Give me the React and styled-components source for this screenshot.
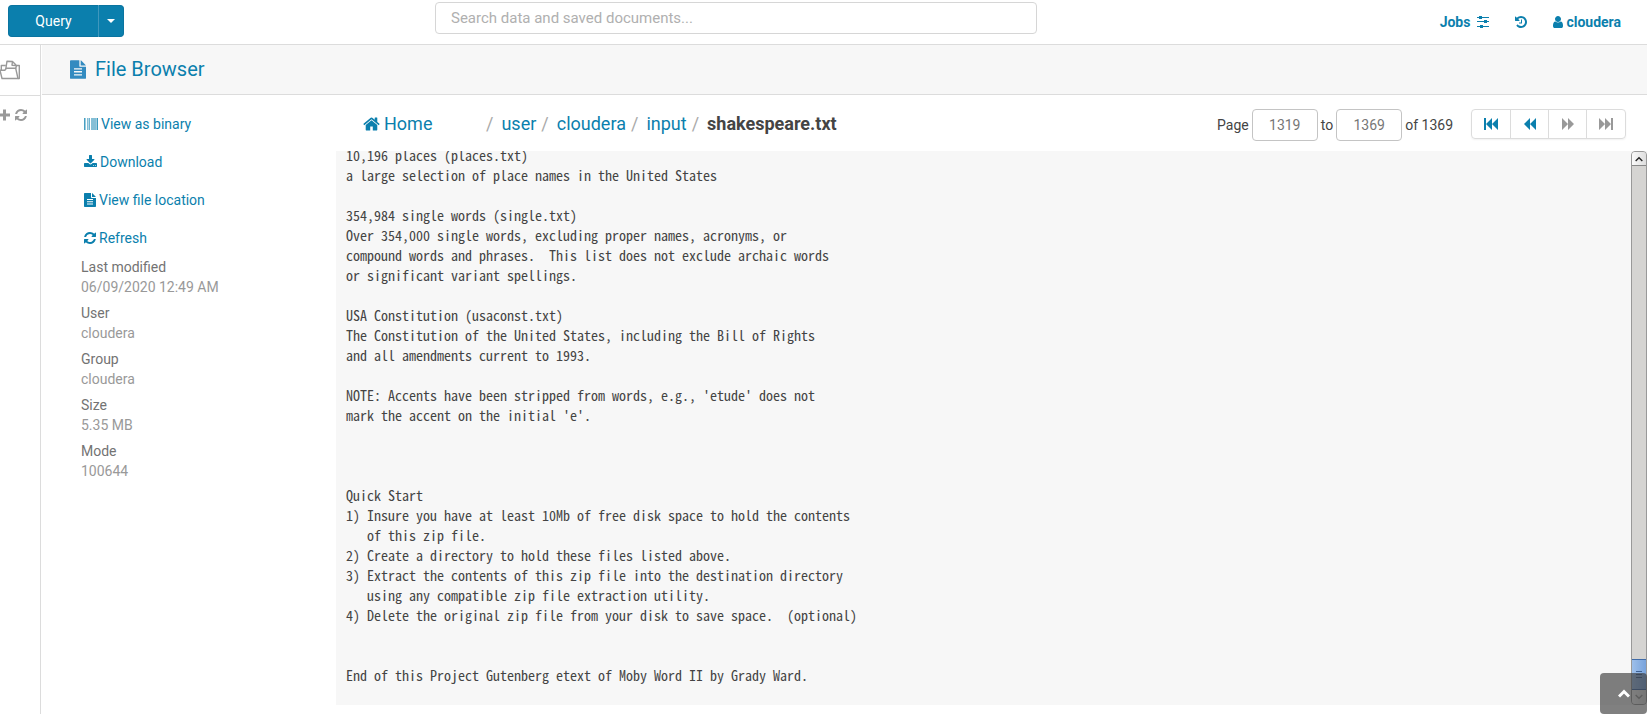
import React from 'react';
import styled, { createGlobalStyle } from 'styled-components';

const blue = '#0b7fad';
const line = '#dcdcdc';

const GlobalStyle = createGlobalStyle`
  * { box-sizing: border-box; }
  body { margin: 0; background: #fff; }
  body, button, input { font-family: Roboto, "Liberation Sans", sans-serif; font-size: 14px; }
  a { color: ${blue}; text-decoration: none; }
`;

const Page = styled.div`
  height: 100vh;
  display: flex;
  flex-direction: column;
  overflow: hidden;
  color: #444;
  line-height: 20px;
`;

const Header = styled.header`
  display: flex;
  align-items: flex-start;
  height: 45px;
  flex: none;
  border-bottom: 1px solid ${line};
`;

const QueryArea = styled.div`
  display: flex;
  flex: 0 0 435px;
  padding: 5px 0 0 8px;
`;

const QueryButton = styled.button`
  height: 32px;
  width: ${(p) => (p.$caret ? 26 : 90)}px;
  padding: 0;
  display: flex;
  align-items: center;
  justify-content: center;
  color: #fff;
  background: ${blue};
  border: 1px solid #0a74a0;
  border-left-color: ${(p) => (p.$caret ? '#3f97bd' : '#0a74a0')};
  border-width: ${(p) => (p.$caret ? '1px' : '1px 0 1px 1px')};
  border-radius: ${(p) => (p.$caret ? '0 4px 4px 0' : '4px 0 0 4px')};
`;

const SearchBox = styled.input`
  flex: 0 1 602px;
  min-width: 0;
  height: 32px;
  margin-top: 2px;
  padding: 0 15px;
  font-size: 15px;
  border: 1px solid #d6d6d6;
  border-radius: 4px;
  &::placeholder { color: #b0b0b0; opacity: 1; }
`;

const UserNav = styled.nav`
  display: flex;
  align-items: center;
  gap: 26px;
  height: 44px;
  margin-left: auto;
  padding-right: 26px;
`;

const NavLink = styled.a`
  display: flex;
  align-items: center;
  gap: ${(p) => p.$gap || 0}px;
  font-weight: 700;
`;

const Body = styled.div`
  display: flex;
  flex: 1;
  min-height: 0;
`;

const Rail = styled.aside`
  flex: 0 0 41px;
  border-right: 1px solid ${line};
  overflow: hidden;
  color: #999;
`;

const RailRow = styled.div`
  display: flex;
  align-items: center;
  gap: 4px;
  height: ${(p) => (p.$first ? 51 : 38)}px;
  border-bottom: ${(p) => (p.$first ? `1px solid ${line}` : 'none')};
`;

const RailButton = styled.button`
  display: flex;
  padding: 0;
  border: 0;
  background: none;
  color: inherit;
`;

const Main = styled.main`
  flex: 1;
  min-width: 0;
  margin-left: 1px;
  display: flex;
  flex-direction: column;
`;

const TitleBar = styled.div`
  display: flex;
  align-items: center;
  gap: 9px;
  height: 50px;
  flex: none;
  padding-left: 28px;
  background: #f7f7f7;
  border-bottom: 1px solid ${line};
  color: #338bc0;
`;

const Title = styled.h1`
  margin: 0;
  padding-bottom: 2px;
  font-size: 20px;
  font-weight: 400;
  color: ${blue};
`;

const Content = styled.div`
  display: flex;
  flex: 1;
  min-height: 0;
`;

const Sidebar = styled.div`
  flex: 0 0 294px;
  padding: 10px 0 0 39px;
`;

const Actions = styled.nav`
  display: flex;
  flex-direction: column;
  padding-left: 3px;
`;

const Action = styled.a`
  display: flex;
  align-items: center;
  gap: 3px;
  height: 38px;
`;

const Meta = styled.dl`
  margin: 0;
`;

const MetaLabel = styled.dt`
  color: #737373;
`;

const MetaValue = styled.dd`
  margin: 0 0 6px;
  color: #999;
`;

const Viewer = styled.section`
  flex: 1;
  min-width: 0;
  display: flex;
  flex-direction: column;
  padding: 14px 0 9px;
`;

const Toolbar = styled.div`
  display: flex;
  align-items: flex-start;
  justify-content: space-between;
  height: 42px;
  flex: none;
  padding: 0 21px 0 27px;
`;

const Crumbs = styled.nav`
  display: flex;
  align-items: center;
  height: 30px;
  font-size: 18px;
`;

const HomeLink = styled.a`
  display: flex;
  align-items: center;
  gap: 4px;
  width: 118px;
`;

const Slash = styled.span`
  padding: 0 8px 0 5px;
  color: #aaa;
`;

const Pager = styled.form`
  display: flex;
  align-items: center;
  gap: 3px;
  height: 32px;
`;

const PageLabel = styled.label`
  display: flex;
  align-items: center;
  gap: 3px;
`;

const PageInput = styled.input`
  width: 66px;
  height: 32px;
  padding: 0;
  text-align: center;
  color: #777;
  border: 1px solid #c4c4c4;
  border-radius: 4px;
`;

const SeekGroup = styled.div`
  display: flex;
  align-self: flex-start;
  margin-left: 15px;
  border: 1px solid ${line};
  border-radius: 4px;
  box-shadow: 0 1px 2px rgba(0, 0, 0, 0.06);
`;

const SeekButton = styled.button`
  display: flex;
  align-items: center;
  justify-content: center;
  width: 38px;
  height: 28px;
  padding: 0;
  border: 0;
  background: none;
  color: ${blue};
  &:disabled { color: #999; }
  & + & { border-left: 1px solid ${line}; }
  &:last-child { width: 39px; }
`;

const FilePane = styled.div`
  display: flex;
  flex: 1;
  min-height: 0;
  background: #f7f7f7;
`;

const FileWindow = styled.div`
  flex: 1;
  min-width: 0;
  display: flex;
  flex-direction: column;
  justify-content: flex-end;
  overflow: hidden;
  padding: 0 10px 20px;
`;

const FileText = styled.pre`
  margin: 0;
  font-family: "Noto Sans Mono CJK SC", "Liberation Mono", monospace;
  font-size: 14px;
  line-height: 20px;
`;

const ScrollTrack = styled.div`
  display: flex;
  flex-direction: column;
  flex: 0 0 16px;
  background: #d5d4d2;
  border: 1px solid #999;
  border-radius: 4px;
`;

const ScrollEnd = styled.div`
  display: flex;
  align-items: center;
  justify-content: center;
  height: 14px;
  background: linear-gradient(90deg, #fafafa, #dedede);
  border-bottom: ${(p) => (p.$top ? '1px solid #888' : 'none')};
  border-radius: ${(p) => (p.$top ? '3px 3px 0 0' : '0 0 3px 3px')};
  color: ${(p) => (p.$top ? '#222' : '#999')};
`;

const ScrollThumb = styled.div`
  display: flex;
  flex-direction: column;
  align-items: center;
  justify-content: center;
  gap: 2px;
  height: 31px;
  margin-top: auto;
  background: linear-gradient(90deg, #9dbfea, #78a3dc);
  border: solid #3f6ba8;
  border-width: 1px 0;
`;

const Grip = styled.i`
  width: 6px;
  height: 1px;
  background: #3c5f92;
`;

const TopButton = styled.button`
  position: fixed;
  right: 0;
  bottom: 0;
  width: 47px;
  height: 41px;
  display: flex;
  align-items: center;
  justify-content: center;
  padding: 0;
  border: 0;
  border-radius: 4px;
  background: rgba(60, 60, 60, 0.65);
  color: #fff;
`;

const shapes = {
  home: 'M1472 992v480q0 26-19 45t-45 19h-384v-384h-256v384h-384q-26 0-45-19t-19-45v-480q0-1 .5-3t.5-3l575-474 575 474q1 2 1 6zm223-69l-62 74q-8 9-21 11h-3q-13 0-21-7l-692-577-692 577q-12 8-24 7-13-2-21-11l-62-74q-8-10-7-23.5t11-21.5l719-599q32-26 76-26t76 26l244 204v-195q0-14 9-23t23-9h192q14 0 23 9t9 23v408l219 182q10 8 11 21.5t-7 23.5z',
  refresh: 'M1639 1056q0 5-1 7-64 268-268 434.5t-478 166.5q-146 0-282.5-55t-243.5-157l-129 129q-19 19-45 19t-45-19-19-45v-448q0-26 19-45t45-19h448q26 0 45 19t19 45-19 45l-137 137q71 66 161 102t187 36q134 0 250-65t186-179q11-17 53-117 8-23 30-23h192q13 0 22.5 9.5t9.5 22.5zm25-800v448q0 26-19 45t-45 19h-448q-26 0-45-19t-19-45 19-45l138-138q-148-137-349-137-134 0-250 65t-186 179q-11 17-53 117-8 23-30 23h-199q-13 0-22.5-9.5t-9.5-22.5v-7q65-268 270-434.5t480-166.5q146 0 284 55.5t245 156.5l130-129q19-19 45-19t45 19 19 45z',
  download: 'M1344 1344q0-26-19-45t-45-19-45 19-19 45 19 45 45 19 45-19 19-45zm256 0q0-26-19-45t-45-19-45 19-19 45 19 45 45 19 45-19 19-45zm128-224v320q0 40-28 68t-68 28h-1472q-40 0-68-28t-28-68v-320q0-40 28-68t68-28h465l135 136q58 56 136 56t136-56l136-136h464q40 0 68 28t28 68zm-325-569q17 41-14 70l-448 448q-18 19-45 19t-45-19l-448-448q-31-29-14-70 17-39 59-39h256v-448q0-26 19-45t45-19h256q26 0 45 19t19 45v448h256q42 0 59 39z',
  user: 'M1536 1399q0 109-62.5 187t-150.5 78h-854q-88 0-150.5-78t-62.5-187q0-85 8.5-160.5t31.5-152 58.5-131 94-89 134.5-34.5q131 128 313 128t313-128q76 0 134.5 34.5t94 89 58.5 131 31.5 152 8.5 160.5zm-256-887q0 159-112.5 271.5t-271.5 112.5-271.5-112.5-112.5-271.5 112.5-271.5 271.5-112.5 271.5 112.5 112.5 271.5z',
  history: 'M1664 896q0 156-61 298t-164 245-245 164-298 61q-172 0-327-72.5t-264-204.5q-7-10-6.5-22.5t8.5-20.5l137-138q10-9 25-9 16 2 23 12 73 95 179 147t225 52q104 0 198.5-40.5t163.5-109.5 109.5-163.5 40.5-198.5-40.5-198.5-109.5-163.5-163.5-109.5-198.5-40.5q-98 0-188 35.5t-160 101.5l137 138q31 30 14 69-17 40-59 40h-448q-26 0-45-19t-19-45v-448q0-42 40-59 39-17 69 14l130 129q107-101 244.5-156.5t284.5-55.5q156 0 298 61t245 164 164 245 61 298zm-640-288v448q0 14-9 23t-23 9h-320q-14 0-23-9t-9-23v-64q0-14 9-23t23-9h224v-352q0-14 9-23t23-9h64q14 0 23 9t9 23z',
};

// Each glyph sits on a 1792-unit grid; `box` trims its side bearings.
const Glyph = ({ name, box = '0 0 1792 1792', w = 14, h = 14 }) => (
  <svg width={w} height={h} viewBox={box} fill="currentColor" aria-hidden="true">
    <path d={shapes[name]} />
  </svg>
);

const Doc = ({ w, h }) => (
  <svg width={w} height={h} viewBox="0 0 12 14" fill="currentColor" aria-hidden="true">
    <path fillRule="evenodd" d="M.7 0H7v4.3q0 .7.7.7H12v8.3q0 .7-.7.7H.7Q0 14 0 13.300V.7Q0 0 .7 0zM3 6v1h6V6zM3 8.200v1h6v-1zM3 10.500v1h6v-1z" />
    <path d="M8 .1q.3.1.6.4l2.900 2.900q.3.3.4.6H8z" />
  </svg>
);

const Barcode = () => (
  <svg width="14" height="12" viewBox="0 0 14 12" fill={blue} aria-hidden="true">
    <rect width="1" height="12" opacity=".75" />
    <rect x="1" width="1" height="12" opacity=".4" />
    <rect x="3" width="1" height="12" opacity=".5" />
    <rect x="4" width="1" height="12" opacity=".3" />
    <rect x="5" width="1" height="12" opacity=".6" />
    <rect x="7" width="5" height="12" opacity=".5" />
    <rect x="12" width="1" height="12" opacity=".4" />
    <rect x="13" width="1" height="12" opacity=".8" />
  </svg>
);

const Sliders = () => (
  <svg width="12" height="12" viewBox="0 0 12 12" fill="currentColor" aria-hidden="true">
    <path d="M0 1h12v1H0zM0 5h12v1H0zM0 10h12v1H0z" />
    <path d="M2 0h3v3H2zM7 4h3v3H7zM3 9h3v3H3z" />
  </svg>
);

const Folder = () => (
  <svg width="21" height="20" viewBox="0 0 21 20" fill="none" stroke="#999" strokeWidth="1.400" strokeLinejoin="round" aria-hidden="true">
    <path d="M0 10.300h4.800l1.700-2h9.200l2.300 10.200H2z" />
    <path d="M1.300 10V5.500h4.500M17 5.500h2.300v13H18" />
    <path d="M5.800 9L7 1.200l5.500 .3 4 4-.8 3M12.500 1.500l-.5 3.700 4.500.3" />
  </svg>
);

const seekPaths = {
  first: 'M0 0h2v12H0zM8 0v12L2 6zM14 0v12L8 6z',
  prev: 'M7 0v12L1 6zM13 0v12L7 6z',
  next: 'M1 0v12l6-6zM7 0v12l6-6z',
  last: 'M0 0v12l6-6zM6 0v12l6-6zM12 0h2v12h-2z',
};

const Seek = ({ kind }) => (
  <svg width="14" height="12" viewBox="0 0 14 12" fill="currentColor" aria-hidden="true">
    <path d={seekPaths[kind]} />
  </svg>
);

const Chevron = ({ w = 8, stroke = 2, down }) => (
  <svg width={w} height={w * 0.75} viewBox="0 0 12 9" fill="none" stroke="currentColor" strokeWidth={stroke} aria-hidden="true">
    <path d={down ? 'M1 1.500l5 5 5-5' : 'M1 7.500l5-5 5 5'} />
  </svg>
);

const meta = [
  ['Last modified', '06/09/2020 12:49 AM'],
  ['User', 'cloudera'],
  ['Group', 'cloudera'],
  ['Size', '5.35 MB'],
  ['Mode', '100644'],
];

const seeks = [
  ['first', 'First page', false],
  ['prev', 'Previous page', false],
  ['next', 'Next page', true],
  ['last', 'Last page', true],
];

const fileText = `10,196 places (places.txt)
a large selection of place names in the United States

354,984 single words (single.txt)
Over 354,000 single words, excluding proper names, acronyms, or
compound words and phrases.  This list does not exclude archaic words
or significant variant spellings.

USA Constitution (usaconst.txt)
The Constitution of the United States, including the Bill of Rights
and all amendments current to 1993.

NOTE: Accents have been stripped from words, e.g., 'etude' does not
mark the accent on the initial 'e'.



Quick Start
1) Insure you have at least 10Mb of free disk space to hold the contents
   of this zip file.
2) Create a directory to hold these files listed above.
3) Extract the contents of this zip file into the destination directory
   using any compatible zip file extraction utility.
4) Delete the original zip file from your disk to save space.  (optional)


End of this Project Gutenberg etext of Moby Word II by Grady Ward.`;

export default function App() {
  return (
    <Page>
      <GlobalStyle />
      <Header>
        <QueryArea>
          <QueryButton>Query</QueryButton>
          <QueryButton $caret aria-label="More query types">
            <svg width="8" height="4" viewBox="0 0 8 4" fill="#fff" aria-hidden="true"><path d="M0 0h8L4 4z" /></svg>
          </QueryButton>
        </QueryArea>
        <SearchBox type="text" aria-label="Search" placeholder="Search data and saved documents..." />
        <UserNav>
          <NavLink href="#jobs" $gap={7}>Jobs <Sliders /></NavLink>
          <NavLink href="#history" aria-label="History"><Glyph name="history" box="128 128 1536 1536" w={12} h={12} /></NavLink>
          <NavLink href="#user" $gap={3}><Glyph name="user" box="256 128 1280 1536" w={10} h={12} />cloudera</NavLink>
        </UserNav>
      </Header>
      <Body>
        <Rail>
          <RailRow $first><RailButton aria-label="Documents"><Folder /></RailButton></RailRow>
          <RailRow>
            <RailButton aria-label="Add">
              <svg width="10" height="12" viewBox="0 0 10 12" fill="currentColor" aria-hidden="true"><path d="M0 4.500h3V.5h3v4h4v3H6v4H3v-4H0z" /></svg>
            </RailButton>
            <RailButton aria-label="Reload"><Glyph name="refresh" /></RailButton>
          </RailRow>
        </Rail>
        <Main>
          <TitleBar><Doc w={16} h={19} /><Title>File Browser</Title></TitleBar>
          <Content>
            <Sidebar>
              <Actions>
                <Action href="#binary"><Barcode />View as binary</Action>
                <Action href="#download"><Glyph name="download" box="64 0 1664 1792" w={13} />Download</Action>
                <Action href="#location"><Doc w={12} h={14} />View file location</Action>
                <Action href="#refresh"><Glyph name="refresh" box="128 0 1536 1792" w={12} />Refresh</Action>
              </Actions>
              <Meta>
                {meta.map(([label, value]) => (
                  <React.Fragment key={label}>
                    <MetaLabel>{label}</MetaLabel>
                    <MetaValue>{value}</MetaValue>
                  </React.Fragment>
                ))}
              </Meta>
            </Sidebar>
            <Viewer>
              <Toolbar>
                <Crumbs>
                  <HomeLink href="#home"><Glyph name="home" box="64 0 1664 1792" w={17} h={18} />Home</HomeLink>
                  {['user', 'cloudera', 'input'].map((name) => (
                    <React.Fragment key={name}><Slash>/</Slash><a href={`#${name}`}>{name}</a></React.Fragment>
                  ))}
                  <Slash>/</Slash><strong>shakespeare.txt</strong>
                </Crumbs>
                <Pager>
                  <PageLabel>Page <PageInput type="text" defaultValue="1319" /></PageLabel>
                  <PageLabel>to <PageInput type="text" defaultValue="1369" /></PageLabel>
                  <span>of 1369</span>
                  <SeekGroup>
                    {seeks.map(([kind, label, off]) => (
                      <SeekButton key={kind} type="button" aria-label={label} disabled={off}><Seek kind={kind} /></SeekButton>
                    ))}
                  </SeekGroup>
                </Pager>
              </Toolbar>
              <FilePane>
                <FileWindow><FileText>{fileText}</FileText></FileWindow>
                <ScrollTrack aria-hidden="true">
                  <ScrollEnd $top><Chevron /></ScrollEnd>
                  <ScrollThumb><Grip /><Grip /><Grip /></ScrollThumb>
                  <ScrollEnd><Chevron down /></ScrollEnd>
                </ScrollTrack>
              </FilePane>
            </Viewer>
          </Content>
        </Main>
      </Body>
      <TopButton aria-label="Back to top"><Chevron w={12} stroke={3} /></TopButton>
    </Page>
  );
}
